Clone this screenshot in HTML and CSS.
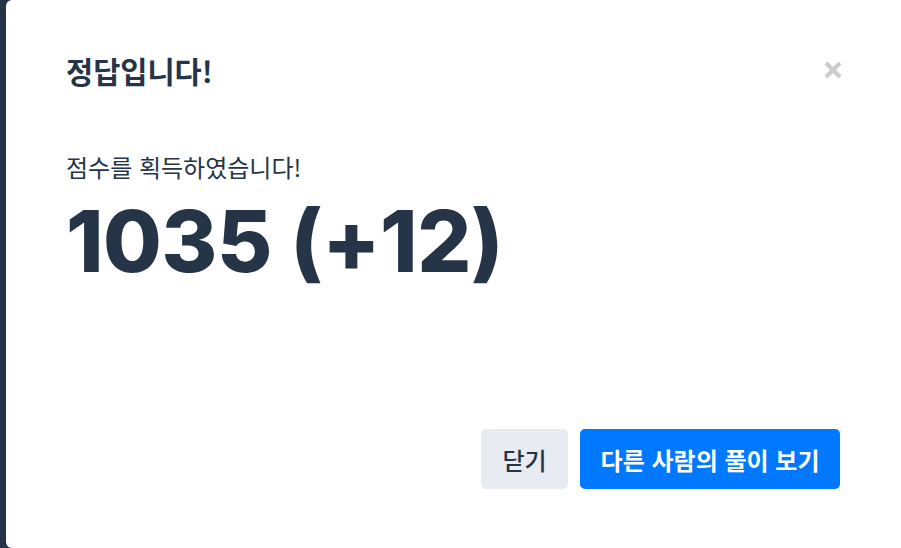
FILE: index.html
```html
<!DOCTYPE html>
<html lang="ko">
<head>
<meta charset="utf-8">
<link rel="stylesheet" href="styles.css">
</head>
<body>
<div class="modal">
  <div class="header">
    <h1 class="title">정답입니다!</h1>
    <button class="close" aria-label="닫기">
      <svg width="20" height="20" viewBox="0 0 20 20"><path d="M3 3 L17 17 M17 3 L3 17" stroke="#cccccc" stroke-width="4.2" stroke-linecap="butt"/></svg>
    </button>
  </div>
  <div class="body">
    <p class="msg">점수를 획득하였습니다!</p>
    <p class="score">1035 (+12)</p>
  </div>
  <div class="footer">
    <button class="btn btn-gray">닫기</button>
    <button class="btn btn-blue">다른 사람의 풀이 보기</button>
  </div>
</div>
</body>
</html>
```
FILE: styles.css
```css
html, body {
  margin: 0;
  padding: 0;
  height: 100%;
  overflow: hidden;
}
body {
  background: #263449;
  font-family: "Noto Sans CJK KR", "Noto Sans", sans-serif;
  color: #263447;
}
.modal {
  margin-left: 6px;
  width: 901px;
  height: 548px;
  box-sizing: border-box;
  background: #fff;
  border-radius: 6px;
  padding: 48px 67px 0 60px;
  display: flex;
  flex-direction: column;
}
.header {
  display: flex;
  justify-content: space-between;
  align-items: center;
  height: 44px;
}
.title {
  margin: 0;
  font-size: 29.5px;
  font-weight: 700;
  line-height: 44px;
}
.close {
  border: 0;
  background: none;
  padding: 0;
  margin-right: -3px;
  width: 20px;
  height: 20px;
  display: flex;
}
.body {
  padding-top: 58px;
}
.msg {
  margin: 0;
  font-size: 24px;
  line-height: 34px;
}
.score {
  margin: 8px 0 0 0;
  font-family: Inter, "Noto Sans", sans-serif;
  font-size: 85px;
  font-weight: 800;
  line-height: 100px;
  letter-spacing: -0.4px;
}
.footer {
  margin-top: auto;
  margin-bottom: 59px;
  display: flex;
  justify-content: flex-end;
  gap: 12px;
}
.btn {
  height: 60px;
  border: 0;
  border-radius: 5px;
  padding: 0 20.5px;
  font-family: "Noto Sans CJK KR", "Noto Sans", sans-serif;
  font-size: 24px;
}
.btn-gray {
  background: #e8ebf2;
  color: #263447;
  font-weight: 500;
  padding: 0 21.5px;
}
.btn-blue {
  background: #0078ff;
  color: #fff;
  font-weight: 700;
}
```
